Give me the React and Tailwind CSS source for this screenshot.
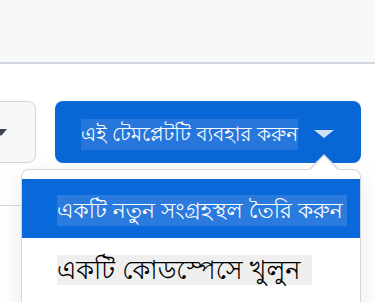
import { useState } from 'react';

export default function App() {
    const [active] = useState(0);

    const items = [
        { label: 'একটি নতুন সংগ্রহস্থল তৈরি করুন', size: 'text-[21.7px]' },
        { label: 'একটি কোডস্পেসে খুলুন', size: 'text-[25.4px]' },
    ];

    return (
        <div className="relative h-[302px] w-[375px] overflow-hidden bg-white" style={{ fontFamily: '"Liberation Sans", "Lohit Bengali", sans-serif' }}>
            <div className="h-[64px] border-b-2 border-[#d0d7de] bg-[#f6f8fa]" />

            <div className="flex items-start gap-[19px] pt-[37px]">
                <button className="ml-[-20px] flex h-[62px] w-[56px] items-center rounded-lg border border-[#d0d7de] bg-[#f6f8fa]">
                    <span className="ml-[14px] h-0 w-0 border-x-[6px] border-t-[7px] border-x-transparent border-t-[#3d444d]" />
                </button>

                <button className="flex h-[62px] w-[306px] items-center rounded-lg bg-[#0866d6] pl-[26px] pt-[4px] text-white">
                    <span className="inline-block h-[31px] whitespace-nowrap bg-[#2776db] text-[19.9px] leading-[31px]">এই টেমপ্লেটটি ব্যবহার করুন</span>
                    <span className="ml-[16px] h-0 w-0 border-x-[10px] border-t-[8px] border-x-transparent border-t-[#cfe0f5]" />
                </button>
            </div>

            <div className="absolute left-0 top-[205px] h-px w-[21px] bg-[#d0d7de]" />

            <div className="absolute left-[21px] top-[169px] w-[340px] rounded-lg border border-[#d0d7de] bg-white pt-[9px] pb-[20px] shadow-[0_8px_24px_rgba(140,149,159,0.2)]">
                <div className="absolute -top-[16px] right-[20px] h-0 w-0 border-x-[16px] border-b-[16px] border-x-transparent border-b-[#d0d7de]" />
                <div className="absolute -top-[14px] right-[21px] h-0 w-0 border-x-[15px] border-b-[15px] border-x-transparent border-b-white" />
                {items.map((item, i) => (
                    <div
                        key={item.label}
                        className={
                            i === active
                                ? 'flex h-[59px] items-center bg-[#0969da] pl-[35px] pt-[4px] text-white'
                                : 'flex h-[59px] items-center pl-[35px] pt-[4px] text-black'
                        }
                    >
                        <span
                            className={
                                i === active
                                    ? `inline-block h-[31px] whitespace-nowrap bg-[#2a7bdd] pr-[4px] leading-[31px] ${item.size}`
                                    : `inline-block h-[30px] whitespace-nowrap bg-[#efefef] pr-[12px] leading-[30px] ${item.size}`
                            }
                        >
                            {item.label}
                        </span>
                    </div>
                ))}
            </div>
        </div>
    );
}
